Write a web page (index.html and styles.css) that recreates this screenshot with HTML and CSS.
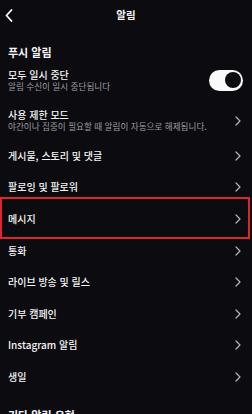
FILE: index.html
```html
<!DOCTYPE html>
<html lang="ko">
<head>
<meta charset="utf-8">
<title>알림</title>
<link rel="stylesheet" href="styles.css">
</head>
<body>
<header class="topbar">
  <svg class="back" width="8" height="13" viewBox="0 0 8 13"><path d="M6.5 1 L1.5 6.5 L6.5 12" fill="none" stroke="#fff" stroke-width="1.8" stroke-linecap="round" stroke-linejoin="round"/></svg>
  <h1 class="page-title">알림</h1>
</header>
<main class="list">
  <h2 class="section">푸시 알림</h2>
  <div class="row row-pause">
    <div class="text">
      <div class="title">모두 일시 중단</div>
      <div class="sub">알림 수신이 일시 중단됩니다</div>
    </div>
    <span class="toggle"><span class="knob"></span></span>
  </div>
  <div class="row row-limit">
    <div class="text">
      <div class="title">사용 제한 모드</div>
      <div class="sub">야간이나 집중이 필요할 때 알림이 자동으로 해제됩니다.</div>
    </div>
    <svg class="chev" width="6" height="10" viewBox="0 0 6 10"><path d="M1 1 L5 5 L1 9" fill="none" stroke="#b5b5b8" stroke-width="1.2" stroke-linecap="round" stroke-linejoin="round"/></svg>
  </div>
  <div class="row"><span class="title">게시물, 스토리 및 댓글</span><svg class="chev" width="6" height="10" viewBox="0 0 6 10"><path d="M1 1 L5 5 L1 9" fill="none" stroke="#b5b5b8" stroke-width="1.2" stroke-linecap="round" stroke-linejoin="round"/></svg></div>
  <div class="row"><span class="title">팔로잉 및 팔로워</span><svg class="chev" width="6" height="10" viewBox="0 0 6 10"><path d="M1 1 L5 5 L1 9" fill="none" stroke="#b5b5b8" stroke-width="1.2" stroke-linecap="round" stroke-linejoin="round"/></svg></div>
  <div class="row highlight"><span class="title">메시지</span><svg class="chev" width="6" height="10" viewBox="0 0 6 10"><path d="M1 1 L5 5 L1 9" fill="none" stroke="#b5b5b8" stroke-width="1.2" stroke-linecap="round" stroke-linejoin="round"/></svg></div>
  <div class="row"><span class="title">통화</span><svg class="chev" width="6" height="10" viewBox="0 0 6 10"><path d="M1 1 L5 5 L1 9" fill="none" stroke="#b5b5b8" stroke-width="1.2" stroke-linecap="round" stroke-linejoin="round"/></svg></div>
  <div class="row"><span class="title">라이브 방송 및 릴스</span><svg class="chev" width="6" height="10" viewBox="0 0 6 10"><path d="M1 1 L5 5 L1 9" fill="none" stroke="#b5b5b8" stroke-width="1.2" stroke-linecap="round" stroke-linejoin="round"/></svg></div>
  <div class="row"><span class="title">기부 캠페인</span><svg class="chev" width="6" height="10" viewBox="0 0 6 10"><path d="M1 1 L5 5 L1 9" fill="none" stroke="#b5b5b8" stroke-width="1.2" stroke-linecap="round" stroke-linejoin="round"/></svg></div>
  <div class="row"><span class="title">Instagram 알림</span><svg class="chev" width="6" height="10" viewBox="0 0 6 10"><path d="M1 1 L5 5 L1 9" fill="none" stroke="#b5b5b8" stroke-width="1.2" stroke-linecap="round" stroke-linejoin="round"/></svg></div>
  <div class="row"><span class="title">생일</span><svg class="chev" width="6" height="10" viewBox="0 0 6 10"><path d="M1 1 L5 5 L1 9" fill="none" stroke="#b5b5b8" stroke-width="1.2" stroke-linecap="round" stroke-linejoin="round"/></svg></div>
  <h2 class="section section-other">기타 알림 유형</h2>
</main>
</body>
</html>
```
FILE: styles.css
```css
* { box-sizing: border-box; }
html, body { margin: 0; padding: 0; }
body {
  width: 252px;
  height: 414px;
  overflow: hidden;
  background: #0c0c10;
  color: #f5f5f7;
  font-family: "Noto Sans CJK KR", "Noto Sans", sans-serif;
}
.topbar {
  position: relative;
  height: 30px;
  display: flex;
  align-items: center;
  justify-content: center;
}
.back {
  position: absolute;
  left: 5px;
  top: 9px;
}
.page-title {
  margin: 0;
  font-size: 10.5px;
  font-weight: 700;
  line-height: 14px;
}
.list {
  display: flex;
  flex-direction: column;
}
.section {
  margin: 15px 0 0;
  padding: 0 8px;
  font-size: 11px;
  font-weight: 700;
  line-height: 14px;
}
.section-other { margin-top: 15px; }
.row {
  position: relative;
  height: 31.6px;
  padding: 0 11px 0 8px;
  display: flex;
  align-items: center;
  justify-content: space-between;
}
.row-pause { height: 42px; padding-right: 9px; }
.row-limit { height: 39px; }
.text { display: flex; flex-direction: column; }
.title {
  font-size: 10px;
  font-weight: 500;
  line-height: 12px;
  color: #f5f5f7;
}
.sub {
  font-size: 8.6px;
  line-height: 11px;
  color: #9c9ca2;
}
.chev { flex: none; }
.toggle {
  flex: none;
  width: 34px;
  height: 21px;
  border-radius: 11px;
  background: #fafafa;
  display: flex;
  align-items: center;
  justify-content: flex-end;
  padding-right: 2px;
}
.knob {
  width: 16px;
  height: 16px;
  border-radius: 50%;
  background: #0c0c10;
}
.highlight::after {
  content: "";
  position: absolute;
  left: 0;
  right: 2px;
  top: -6px;
  bottom: -4px;
  border: 2px solid #e2252b;
  pointer-events: none;
}
```
